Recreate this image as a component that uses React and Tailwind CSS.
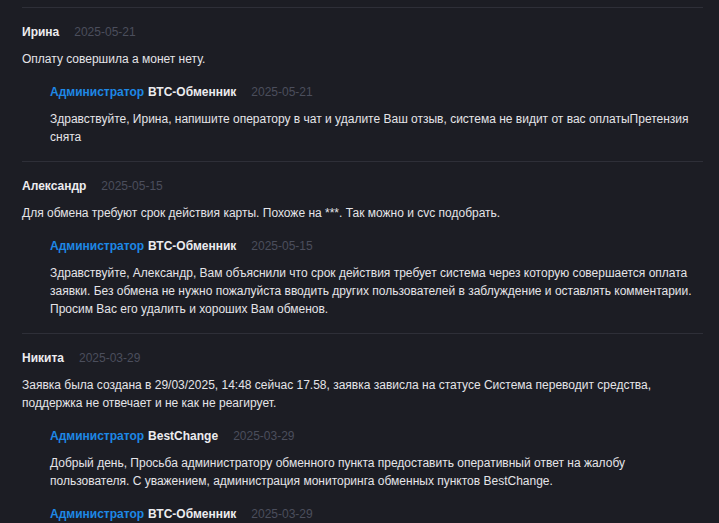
import React from "react";

const reviews = [
  {
    name: "Ирина",
    date: "2025-05-21",
    text: "Оплату совершила а монет нету.",
    replies: [
      {
        who: "ВТС-Обменник",
        date: "2025-05-21",
        text: "Здравствуйте, Ирина, напишите оператору в чат и удалите Ваш отзыв, система не видит от вас оплатыПретензия снята",
      },
    ],
  },
  {
    name: "Александр",
    date: "2025-05-15",
    text: "Для обмена требуют срок действия карты. Похоже на ***. Так можно и cvc подобрать.",
    replies: [
      {
        who: "ВТС-Обменник",
        date: "2025-05-15",
        text: "Здравствуйте, Александр, Вам объяснили что срок действия требует система через которую совершается оплата заявки. Без обмена не нужно пожалуйста вводить других пользователей в заблуждение и оставлять комментарии. Просим Вас его удалить и хороших Вам обменов.",
      },
    ],
  },
  {
    name: "Никита",
    date: "2025-03-29",
    text: "Заявка была создана в 29/03/2025, 14:48 сейчас 17.58, заявка зависла на статусе Система переводит средства, поддержка не отвечает и не как не реагирует.",
    replies: [
      {
        who: "BestChange",
        date: "2025-03-29",
        text: "Добрый день, Просьба администратору обменного пункта предоставить оперативный ответ на жалобу пользователя. С уважением, администрация мониторинга обменных пунктов BestChange.",
      },
      {
        who: "ВТС-Обменник",
        date: "2025-03-29",
        text: "",
      },
    ],
  },
];

const Reply = ({ reply }) => (
  <div className="mt-[15px] pl-7">
    <div className="flex items-center">
      <span className="font-bold text-[#1e88e5]">Администратор</span>
      <span className="ml-1 font-bold text-[#ececef]">{reply.who}</span>
      <span className="ml-[15px] text-[#4b4e5c]">{reply.date}</span>
    </div>
    {reply.text && <p className="mt-[9px] text-[#e4e4e8]">{reply.text}</p>}
  </div>
);

const App = () => {
  return (
    <div
      className="min-h-screen bg-[#1c1d24] pl-[22px] pr-4 pt-[7px] text-[12px] leading-[18px]"
      style={{ fontFamily: '"Liberation Sans", Arial, sans-serif' }}
    >
      {reviews.map((r) => (
        <div key={r.name} className="border-t border-[#2e2f38] pt-[15px] pb-[15px] w-[681px]">
          <div className="flex items-center">
            <span className="font-bold text-[#ececef]">{r.name}</span>
            <span className="ml-[15px] text-[#4b4e5c]">{r.date}</span>
          </div>
          <p className="mt-[9px] text-[#e4e4e8]">{r.text}</p>
          {r.replies.map((rep, i) => (
            <Reply key={i} reply={rep} />
          ))}
        </div>
      ))}
    </div>
  );
};

export default App;
